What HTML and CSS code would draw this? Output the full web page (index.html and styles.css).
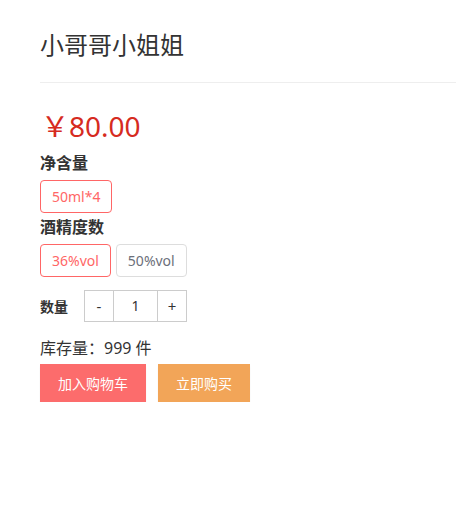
FILE: index.html
```html
<!DOCTYPE html>
<html lang="zh">
<head>
    <meta charset="UTF-8">
    <meta name="viewport" content="width=device-width, initial-scale=1.0">
    <title>商品详情</title>
    <link rel="stylesheet" href="styles.css">
</head>
<body>
    <div class="detail">
        <div class="detail-header">
            <h1 class="goods-name">小哥哥小姐姐</h1>
        </div>

        <div class="price">￥80.00</div>

        <div class="spec-title">净含量</div>
        <div class="options">
            <div class="option active">50ml*4</div>
        </div>

        <div class="spec-title second">酒精度数</div>
        <div class="options">
            <div class="option active">36%vol</div>
            <div class="option">50%vol</div>
        </div>

        <div class="quantity">
            <span class="quantity-label">数量</span>
            <div class="stepper">
                <div class="step-btn">-</div>
                <div class="step-value">1</div>
                <div class="step-btn">+</div>
            </div>
        </div>

        <div class="stock">库存量：999 件</div>

        <div class="actions">
            <button class="btn btn-cart">加入购物车</button>
            <button class="btn btn-buy">立即购买</button>
        </div>
    </div>
</body>
</html>
```

FILE: styles.css
```css
* { margin: 0; padding: 0; box-sizing: border-box; }

body {
    font-family: "Noto Sans", "Noto Sans CJK SC", sans-serif;
    color: #333;
    background: white;
}

.detail { padding-left: 40px; }

.detail-header {
    padding: 27px 0 19px;
    border-bottom: 1px solid #eee;
}

.goods-name {
    font-size: 24px;
    font-weight: normal;
    line-height: 36px;
    color: #333;
}

.price {
    margin-top: 22px;
    padding-left: 1px;
    font-size: 28px;
    line-height: 42px;
    color: #d62b1f;
}

.spec-title {
    margin-top: 4px;
    font-size: 16px;
    font-weight: bold;
    line-height: 24px;
}

.spec-title.second { margin-top: 2px; }

.options {
    display: flex;
    gap: 5px;
    margin-top: 5px;
}

.option {
    height: 33px;
    line-height: 31px;
    padding: 0 11px;
    border: 1px solid #ddd;
    border-radius: 4px;
    font-size: 14px;
    color: #6b6f7a;
    cursor: pointer;
}

.option.active { border-color: #f66; color: #f66; }

.quantity {
    display: flex;
    align-items: center;
    gap: 16px;
    margin-top: 13px;
}

.quantity-label { font-size: 14px; font-weight: bold; }

.stepper { display: flex; }

.step-btn, .step-value {
    height: 32px;
    line-height: 30px;
    border: 1px solid #ccc;
    text-align: center;
    font-size: 14px;
}

.step-btn { width: 30px; font-size: 15px; cursor: pointer; }
.step-value { width: 45px; margin: 0 -1px; }

.stock {
    margin-top: 14px;
    font-size: 16px;
    line-height: 24px;
}

.actions {
    display: flex;
    gap: 12px;
    margin-top: 4px;
}

.btn {
    height: 38px;
    padding: 0 18px;
    border: none;
    color: white;
    font-family: inherit;
    font-size: 14px;
    cursor: pointer;
    box-shadow: 0 2px 2px rgba(0,0,0,0.05);
}

.btn-cart { background: #fc6c6c; }
.btn-buy { background: #f2a558; }
```
